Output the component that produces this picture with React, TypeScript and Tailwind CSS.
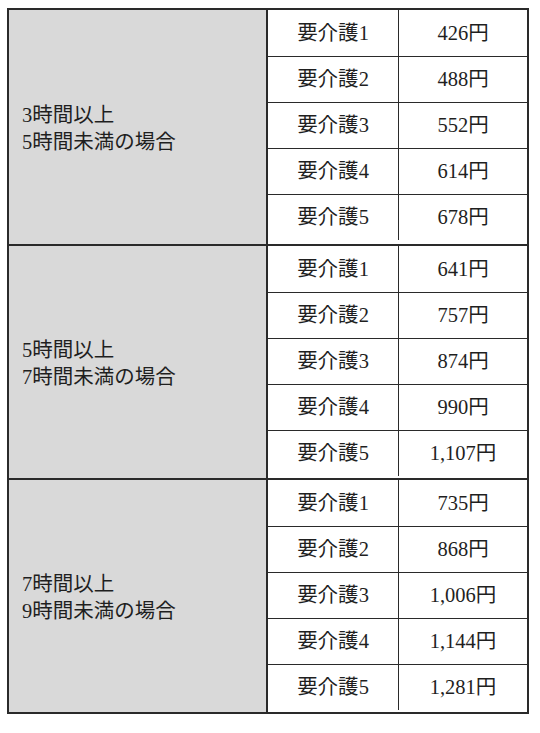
const groups = [
  {
    label: ["3時間以上", "5時間未満の場合"],
    prices: ["426円", "488円", "552円", "614円", "678円"],
  },
  {
    label: ["5時間以上", "7時間未満の場合"],
    prices: ["641円", "757円", "874円", "990円", "1,107円"],
  },
  {
    label: ["7時間以上", "9時間未満の場合"],
    prices: ["735円", "868円", "1,006円", "1,144円", "1,281円"],
  },
]

export default function App() {
  return (
    <div className="w-[540px] h-[733px] bg-white pt-[8px] pl-[7px] text-[#1f1f1f] font-['Liberation_Serif','Noto_Sans_CJK_JP',serif]">
      <div className="w-[522px] border-2 border-[#2a2a2a] flex flex-col">
        {groups.map((g, gi) => (
          <div
            key={gi}
            className={`flex h-[234px] ${gi > 0 ? "border-t-2 border-[#2a2a2a]" : ""}`}
          >
            <div className="w-[259px] shrink-0 bg-[#d9d9d9] border-r-2 border-[#2a2a2a] flex flex-col justify-center pl-[13px] pt-[4px] text-[20.5px] leading-[27px]">
              {g.label.map((l) => (
                <div key={l}>{l}</div>
              ))}
            </div>
            <div className="flex-1 flex flex-col">
              {g.prices.map((p, i) => (
                <div
                  key={i}
                  className={`flex h-[46px] text-[20.5px] ${i > 0 ? "border-t border-[#2a2a2a]" : ""}`}
                >
                  <div className="w-[131px] border-r border-[#2a2a2a] flex items-center justify-center">
                    要介護{i + 1}
                  </div>
                  <div className="flex-1 flex items-center justify-center">{p}</div>
                </div>
              ))}
            </div>
          </div>
        ))}
      </div>
    </div>
  )
}
